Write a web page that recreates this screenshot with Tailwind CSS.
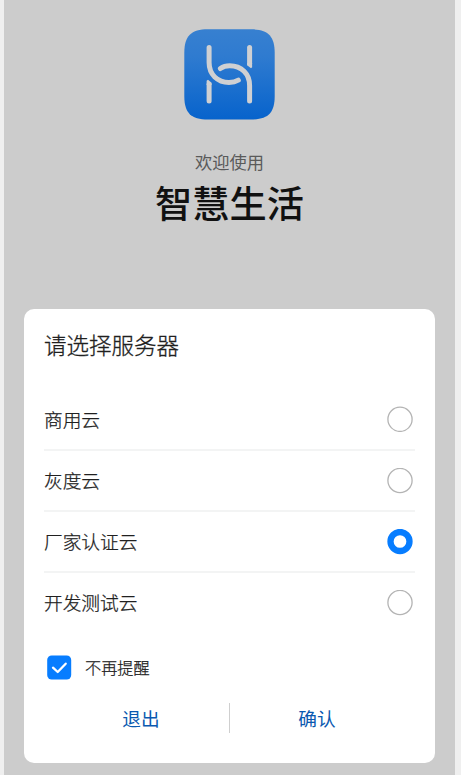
<!DOCTYPE html>
<html lang="zh-CN">
<head>
<meta charset="utf-8">
<title>智慧生活</title>
<script src="https://cdn.jsdelivr.net/npm/@tailwindcss/browser@4"></script>
</head>
<body class="h-[775px] w-[461px] overflow-hidden bg-[#efefef] pl-1 font-['Noto_Sans_CJK_SC',sans-serif]">
<main class="flex h-[775px] w-[451px] flex-col bg-[#cccccc]">
  <header class="flex h-[309px] shrink-0 flex-col items-center pt-[29px]">
    <svg class="h-[91px] w-[91px]" viewBox="0 0 91 91" fill="none">
      <defs><linearGradient id="g" x1="0" y1="0" x2="0" y2="1"><stop offset="0" stop-color="#3780d0"/><stop offset=".3" stop-color="#2f7bd0"/><stop offset="1" stop-color="#0763cc"/></linearGradient></defs>
      <path d="M24 .3H67C84 .3 90.700 7 90.700 24V67C90.700 84 84 90.500 67 90.500H24C7 90.500 .3 84 .3 67V24C.3 7 7 .3 24 .3Z" fill="url(#g)"/>
      <g stroke="#cfd0d2" stroke-width="5" stroke-linecap="round">
        <path d="M25.100 18.500V33.500C25.100 45.500 33.500 53.400 45 53.400C49 53.400 51.800 52.700 54.300 51.200"/>
        <path d="M36.400 39.500C39 37.700 42 36.800 45.700 36.800C57.500 36.800 65.600 45 65.600 56.500V72"/>
        <path d="M65.600 18.500V34.500"/>
        <path d="M25.100 55.500V72"/>
      </g>
      <path d="M63.100 34V36.300L67 39.300L68.100 38.300V34Z" fill="#cfd0d2"/>
      <path d="M27.600 56V53.700L24 50.700L22.600 51.700V56Z" fill="#cfd0d2"/>
    </svg>
    <p class="mt-[29px] text-[17.300px] leading-[26px] text-[#5a5a5a]">欢迎使用</p>
    <h1 class="mt-[3px] text-[37.200px] leading-[48px] font-medium text-[#111111]">智慧生活</h1>
  </header>
  <section class="ml-5 flex h-[454px] w-[411px] flex-col rounded-[10px] bg-white px-5 text-[#202020]">
    <h2 class="mt-[19px] h-[61px] text-[22.500px] leading-[32px] font-light [-webkit-text-stroke:0.3px_#202020]">请选择服务器</h2>
    <ul class="text-[18.700px] font-light [-webkit-text-stroke:0.25px_#202020]">
      <li class="flex h-[62px] w-[371px] items-center justify-between border-b-2 border-[#f3f4f4] pr-[2px]"><span>商用云</span><svg class="size-[26px]" viewBox="0 0 26 26" fill="none" stroke="#b4b4b4" stroke-width="1.300"><circle cx="13" cy="13.300" r="12.100"/></svg></li>
      <li class="flex h-[61px] w-[371px] items-center justify-between border-b-2 border-[#f3f4f4] pr-[2px]"><span>灰度云</span><svg class="size-[26px]" viewBox="0 0 26 26" fill="none" stroke="#b4b4b4" stroke-width="1.300"><circle cx="13" cy="12.500" r="12.100"/></svg></li>
      <li class="flex h-[61px] w-[371px] items-center justify-between border-b-2 border-[#f3f4f4] pr-[2px]"><span>厂家认证云</span><svg class="size-[26px]" viewBox="0 0 26 26" fill="none" stroke="#077dff" stroke-width="6.300"><circle cx="13" cy="12.500" r="9.500"/></svg></li>
      <li class="flex h-[61px] w-[371px] items-center justify-between border-b-2 border-transparent pr-[2px]"><span>开发测试云</span><svg class="size-[26px]" viewBox="0 0 26 26" fill="none" stroke="#b4b4b4" stroke-width="1.300"><circle cx="13" cy="12.500" r="12.100"/></svg></li>
    </ul>
    <label class="mt-[21px] flex h-[25px] items-center pl-[3px] text-[16.200px] font-light [-webkit-text-stroke:0.25px_#202020]">
      <svg class="mr-[13px] size-[25px]" viewBox="0 0 25 25" fill="none"><rect x=".2" y=".5" width="24" height="24" rx="4.500" fill="#077dff"/><path d="M6 12.700L10.700 17L18.700 8.700" stroke="#fff" stroke-width="2.300" stroke-linecap="round" stroke-linejoin="round"/></svg>
      不再提醒
    </label>
    <div class="mt-[23px] flex h-[30px] items-center text-[18.700px] leading-[30px] text-[#0a59b0]">
      <button class="w-[185px] pl-[9px]">退出</button>
      <span class="h-[30px] w-px bg-[#cfcfcf]"></span>
      <button class="w-[185px] pr-[11px]">确认</button>
    </div>
  </section>
</main>
</body>
</html>
